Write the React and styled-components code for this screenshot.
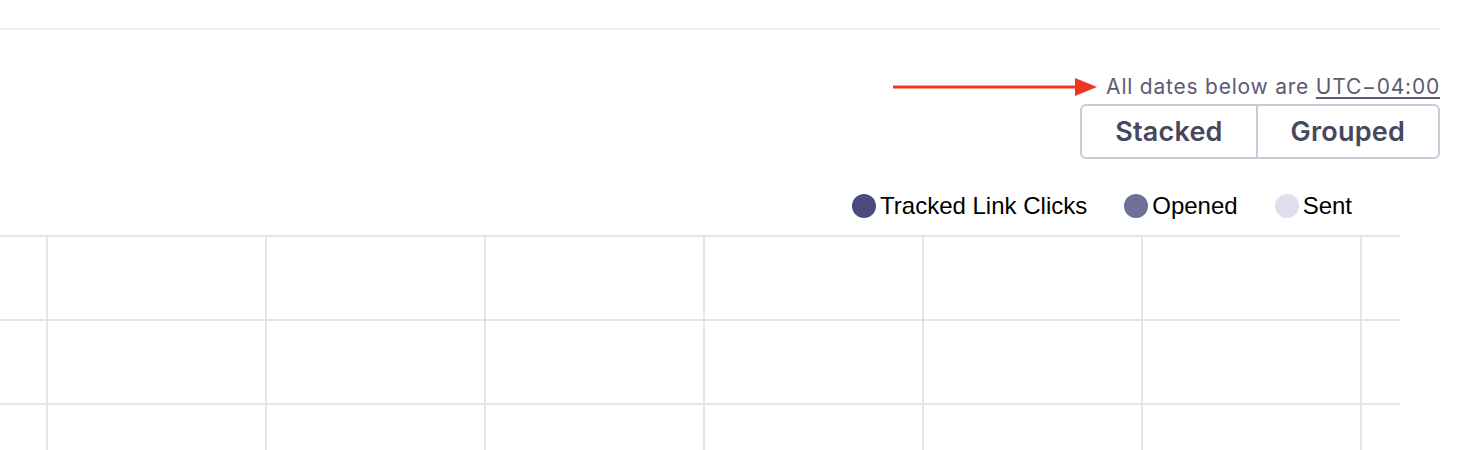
import React from 'react';
import styled, { createGlobalStyle } from 'styled-components';

const GlobalStyle = createGlobalStyle`
  body {
    margin: 0;
    background: #fff;
    font-family: Inter, 'Noto Sans', sans-serif;
  }
`;

const legendItems = [
  { label: 'Tracked Link Clicks', color: '#4a4b7c' },
  { label: 'Opened', color: '#6f7095' },
  { label: 'Sent', color: '#dfdff0' },
];

const Page = styled.div`
  width: 1440px;
  overflow: hidden;
  height: 450px;
`;

const TopRule = styled.div`
  height: 28px;
  border-bottom: 2px solid #ebebf1;
`;

const Controls = styled.div`
  display: flex;
  flex-direction: column;
  align-items: flex-end;
  margin-top: 44px;
`;

const TimezoneRow = styled.div`
  display: flex;
  align-items: center;
  gap: 9px;
  height: 26px;
  font-size: 21px;
  letter-spacing: 0.78px;
  line-height: 26px;
  color: #5b5b72;
`;

const Zone = styled.span`
  text-decoration: underline;
  text-underline-offset: 3px;
  text-decoration-thickness: 1.5px;
`;

const ButtonGroup = styled.div`
  display: flex;
  margin-top: 4px;
  border: 2px solid #cacad8;
  border-radius: 6px;
  height: 51px;
`;

const ToggleButton = styled.button`
  border: none;
  border-left: ${(p) => (p.$first ? 'none' : '2px solid #cacad8')};
  background: transparent;
  padding: 0 33px;
  font-family: Inter, 'Noto Sans', sans-serif;
  font-size: 27px;
  letter-spacing: 0.2px;
  font-weight: 600;
  color: #474760;
  cursor: pointer;
`;

const Chart = styled.div`
  width: 1400px;
`;

const Legend = styled.div`
  display: flex;
  justify-content: flex-end;
  gap: 37px;
  padding-right: 48px;
  margin-top: 33px;
  height: 28px;
  margin-bottom: 15px;
`;

const LegendItem = styled.div`
  display: flex;
  align-items: center;
  gap: 4px;
  font-family: 'Liberation Sans', Arial, sans-serif;
  font-size: 24px;
  line-height: 28px;
  color: #000;
`;

const Dot = styled.span`
  width: 24px;
  height: 24px;
  border-radius: 50%;
  background: ${(p) => p.$color};
`;

const Arrow = () => (
  <svg width="204" height="20" viewBox="0 0 204 20">
    <line x1="0" y1="10" x2="186" y2="10" stroke="#f2331f" strokeWidth="3" />
    <polygon points="182,1 204,10 182,19" fill="#f2331f" />
  </svg>
);

const cols = [47, 266, 485, 704, 923, 1142, 1361];
const rows = [1, 85, 169];

const Grid = () => (
  <svg width="1400" height="215" viewBox="0 0 1400 215" style={{ display: 'block' }}>
    {rows.map((y) => (
      <line key={`r${y}`} x1="0" y1={y} x2="1400" y2={y} stroke="#e5e5e5" strokeWidth="2" />
    ))}
    {cols.map((x) => (
      <line key={`c${x}`} x1={x} y1="0" x2={x} y2="215" stroke="#e5e5e5" strokeWidth="2" />
    ))}
  </svg>
);

const App = () => (
  <Page>
    <GlobalStyle />
    <TopRule />
    <Controls>
      <TimezoneRow>
        <Arrow />
        <span>
          All dates below are <Zone>UTC−04:00</Zone>
        </span>
      </TimezoneRow>
      <ButtonGroup>
        <ToggleButton $first>Stacked</ToggleButton>
        <ToggleButton>Grouped</ToggleButton>
      </ButtonGroup>
    </Controls>
    <Chart>
      <Legend>
        {legendItems.map((item) => (
          <LegendItem key={item.label}>
            <Dot $color={item.color} />
            {item.label}
          </LegendItem>
        ))}
      </Legend>
      <Grid />
    </Chart>
  </Page>
);

export default App;
